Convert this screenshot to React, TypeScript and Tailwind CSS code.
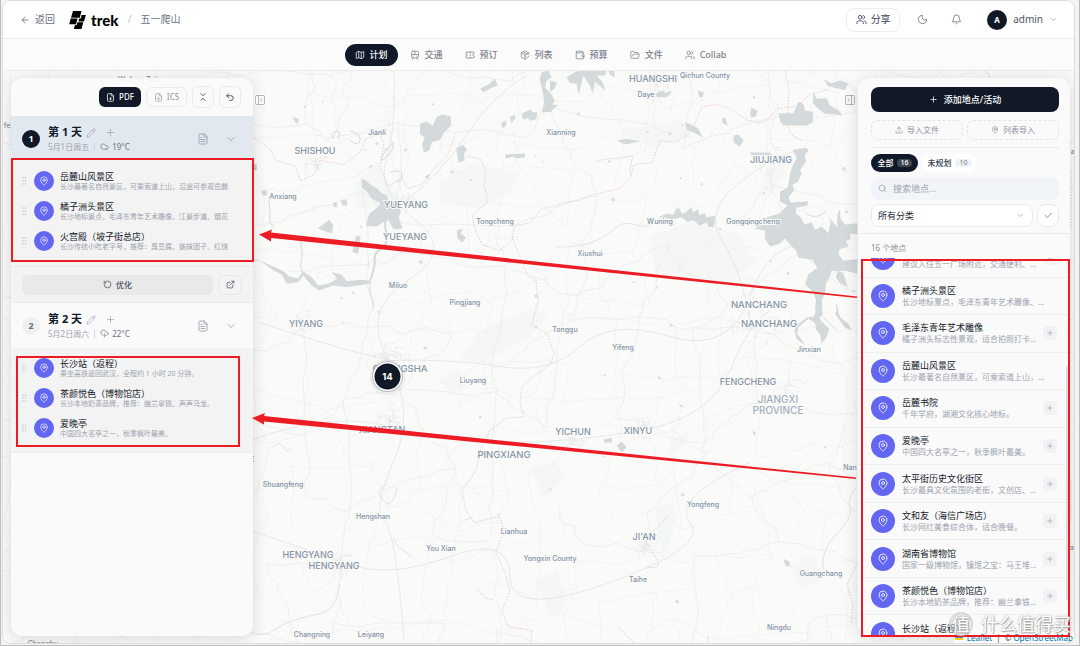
import {
  ArrowLeft, Bell, Check, ChevronDown, ChevronsDownUp, Cloud, CloudLightning, ExternalLink, FileDown, FileText,
  FolderOpen, GripVertical, Map as MapIcon, MapPin, Moon, PackageCheck, PanelLeftClose, PanelRightClose, Pencil,
  Plus, RotateCcw, Search, Ticket, TramFront, Undo2, Upload, Users, Wallet,
} from "lucide-react";
import type { LucideIcon } from "lucide-react";

type Place = { name: string; note: string; addable?: boolean };

const tabs: { label: string; icon: LucideIcon }[] = [
  { label: "计划", icon: MapIcon },
  { label: "交通", icon: TramFront },
  { label: "预订", icon: Ticket },
  { label: "列表", icon: PackageCheck },
  { label: "预算", icon: Wallet },
  { label: "文件", icon: FolderOpen },
  { label: "Collab", icon: Users },
];

const dayOne: Place[] = [
  { name: "岳麓山风景区", note: "长沙最著名自然景区，可乘索道上山，沿途可参观岳麓" },
  { name: "橘子洲头景区", note: "长沙地标景点，毛泽东青年艺术雕像、江景步道、烟花" },
  { name: "火宫殿（坡子街总店）", note: "长沙传统小吃老字号，推荐：臭豆腐、姊妹团子、红烧" },
];

const dayTwo: Place[] = [
  { name: "长沙站（返程）", note: "乘坐高铁返回武汉，全程约 1 小时 20 分钟。" },
  { name: "茶颜悦色（博物馆店）", note: "长沙本地奶茶品牌，推荐：幽兰拿铁、声声乌龙。" },
  { name: "爱晚亭", note: "中国四大名亭之一，秋季枫叶最美。" },
];

const places: Place[] = [
  { name: "五一广场酒店", note: "建议入住五一广场附近，交通便利、...", addable: true },
  { name: "橘子洲头景区", note: "长沙地标景点，毛泽东青年艺术雕像、..." },
  { name: "毛泽东青年艺术雕像", note: "橘子洲头标志性景观，适合拍照打卡...", addable: true },
  { name: "岳麓山风景区", note: "长沙最著名自然景区，可乘索道上山，..." },
  { name: "岳麓书院", note: "千年学府，湖湘文化核心地标。", addable: true },
  { name: "爱晚亭", note: "中国四大名亭之一，秋季枫叶最美。", addable: true },
  { name: "太平街历史文化街区", note: "长沙最具文化氛围的老街，文创店、...", addable: true },
  { name: "文和友（海信广场店）", note: "长沙网红美食综合体，适合晚餐。", addable: true },
  { name: "湖南省博物馆", note: "国家一级博物馆，镇馆之宝：马王堆...", addable: true },
  { name: "茶颜悦色（博物馆店）", note: "长沙本地奶茶品牌，推荐：幽兰拿铁...", addable: true },
  { name: "长沙站（返程）", note: "乘坐高铁返回武汉。", addable: true },
];

const cities: [string, number, number][] = [
  ["SHISHOU", 315, 153], ["YUEYANG", 406, 207], ["YUEYANG", 405, 239], ["YIYANG", 306, 326],
  ["HUANGSHI", 653, 81], ["JIUJIANG", 771, 162], ["FENGCHENG", 748, 384], ["YICHUN", 573, 434],
  ["XINYU", 638, 433], ["JI'AN", 644, 539], ["HENGYANG", 308, 557], ["HENGYANG", 334, 568],
  ["XIANGTAN", 382, 432],
];
const bigCities: [string, number, number][] = [
  ["NANCHANG", 759, 307], ["NANCHANG", 769, 326], ["CHANGSHA", 400, 371], ["PINGXIANG", 504, 457],
];
const towns: [string, number, number][] = [
  ["Jianli", 377, 134], ["Anxiang", 283, 198], ["Xianning", 561, 134], ["Daye", 646, 96], ["Qichun County", 705, 77],
  ["Tongcheng", 495, 223], ["Wuning", 660, 223], ["Gongqingcheng", 753, 223], ["Xiushui", 590, 255],
  ["Miluo", 398, 287], ["Pingjiang", 465, 304], ["Tonggu", 565, 331], ["Yifeng", 623, 349], ["Jinxian", 809, 351],
  ["Liuyang", 473, 382], ["Shuangfeng", 283, 486], ["Hengshan", 373, 518], ["Lianhua", 514, 533], ["You Xian", 441, 550],
  ["Yongxin County", 550, 560], ["Taihe", 638, 581], ["Yongfeng", 703, 506], ["Guangchang", 821, 575],
  ["Ningdu", 779, 629], ["Changning", 312, 636], ["Leiyang", 371, 636], ["Nan", 850, 469], ["Chengbu", 43, 645],
  ["Wufeng Tujia", 140, 81], ["fei", 8, 127], ["li", 255, 169], ["E", 252, 461], ["ar", 1074, 153], ["an", 1074, 549],
];

/* Deterministic noise in [0, 1) for the minor road mesh. */
const noise = (a: number, b: number) => {
  const v = Math.sin(a * 127.1 + b * 311.7) * 43758.5453;
  return v - Math.floor(v);
};

function roadMesh(step: number, seed: number) {
  const node = (i: number, j: number) => [
    i * step + (noise(i + seed, j) - 0.5) * step * 0.9,
    60 + j * step + (noise(j, i + seed) - 0.5) * step * 0.9,
  ];
  let d = "";
  for (let i = -1; i < 1090 / step + 1; i++) {
    for (let j = -1; j < 600 / step + 1; j++) {
      const [x, y] = node(i, j);
      for (const [di, dj] of [[1, 0], [0, 1]]) {
        if (noise(i * 3 + di + seed, j * 5 + dj) < 0.25) continue;
        const [u, v] = node(i + di, j + dj);
        d += `M${x.toFixed(1)} ${y.toFixed(1)}`;
        let px = x;
        let py = y;
        for (let k = 1; k <= 4; k++) {
          const last = k === 4;
          const qx = x + ((u - x) * k) / 4 + (last ? 0 : (noise(px, k + i) - 0.5) * step * 0.16);
          const qy = y + ((v - y) * k) / 4 + (last ? 0 : (noise(py, k + j) - 0.5) * step * 0.16);
          d += `Q${(px + (noise(qx, k) - 0.5) * 4).toFixed(1)} ${(py + (qy - py) / 2).toFixed(1)} ${qx.toFixed(1)} ${qy.toFixed(1)}`;
          px = qx;
          py = qy;
        }
      }
    }
  }
  return d;
}

/* Small local street grids around a town. */
function streets(cx: number, cy: number, r: number) {
  let d = "";
  for (let k = 0; k < 26; k++) {
    const a = noise(k, cx) * 6.28;
    const q = noise(cy, k) * r;
    const x = cx + Math.cos(a) * q;
    const y = cy + Math.sin(a) * q;
    const l = 3 + noise(k, k) * 6;
    d += k % 2 ? `M${x.toFixed(1)} ${y.toFixed(1)}l${l.toFixed(1)} 1` : `M${x.toFixed(1)} ${y.toFixed(1)}l1 ${l.toFixed(1)}`;
  }
  return d;
}

const minorRoads = roadMesh(38, 3);
const majorRoads = roadMesh(71, 11);
const townStreets = [
  [395, 352, 22], [388, 415, 16], [755, 318, 26], [340, 565, 12], [642, 545, 8], [773, 160, 14], [382, 356, 14],
  [405, 200, 10], [300, 320, 12], [572, 440, 12], [640, 425, 14], [785, 385, 18], [660, 80, 16], [315, 160, 12],
].map(([x, y, r]) => streets(x, y, r)).join("");

const ponds = Array.from({ length: 70 }, (_, k) => {
  const x = 255 + noise(k, 7) * 600;
  const y = 75 + noise(9, k) * (k % 3 ? 260 : 550);
  const s = 1 + noise(k, k + 2) * 2;
  return `M${x.toFixed(1)} ${y.toFixed(1)}l${s.toFixed(1)} ${(-s / 2).toFixed(1)}l${(s / 2).toFixed(1)} ${s.toFixed(1)}l${(-s).toFixed(1)} ${(s / 3).toFixed(1)}z`;
}).join("");

function MapCanvas() {
  return (
    <svg className="absolute inset-0 h-full w-full" viewBox="3 70 1071 573" preserveAspectRatio="xMidYMid slice" aria-label="地图">
      <rect x="0" y="60" width="1090" height="600" fill="#fafaf8" />
      <g fill="#f5f7f5">
        <path d="M356 182l22-18 10 20 14 14-20 8-26 2zM440 180l30-16 50 8-10 20-30 16-40-6zM480 330l50-22 18 6-20 24-48 26-20-6zM650 236l40-14 46 10 20 30-30 22-70-10zM764 172l22-10-8 24-12 8zM620 130l60-10 12 16-40 12zM790 565l24-12 8 24-20 14zM535 580l22-10 10 30-14 20zM530 468l26-8 8 18-20 20zM655 510l18-10 4 20-14 40zM672 440l18-10-8 20-14 4zM438 380l20-10 14 14-20 10z" />
      </g>
      <path d={minorRoads} fill="none" stroke="#f0f1f1" strokeWidth="0.8" />
      <path d={majorRoads} fill="none" stroke="#ebedee" strokeWidth="0.9" />
      <path d={townStreets} fill="none" stroke="#e6e8ea" strokeWidth="0.7" />
      <g fill="none" stroke="#e6e8ea" strokeWidth="1">
        <path d="M260 322q60 20 90 28t40 10q60-2 110 6t80-20 90-10 80-40 60-50" />
        <path d="M394 70q2 60-8 90t30 60 -8 60 -20 80 6 100 -10 60 20 120" />
        <path d="M400 205q40-30 66-70t60-60" />
        <path d="M752 330q-10-60-30-90t20-60 60-30" />
        <path d="M250 440q80-30 140-14t120 16 130-12 90-60 40-60" />
        <path d="M250 530q60 20 100 34t100-8 60 20 100 6 80-60 60-60" />
      </g>
      <g fill="none" stroke="#ecc9cc" strokeWidth="1" strokeDasharray="1.5 1.5">
        <path d="M254 138l16 10 6 12 20 6 4 14 14-6 6-14 24 4 16-12 6-14 14-4 4 8-4 24 8 20 14-8 6 10 14-4 14-18 12-12 8-22" />
        <path d="M466 156l14 2 6 12-2 14 4 18-16 12 4 18 6 12 18 6 12-10 2-14 16-4 12-14 12-2 10-4 14-2 16-6 26-6 10-10 4-14 18-2 8-22 16 2 16-12 10-24 16-2 12 4 18 12 16 2 14-14 18-2 14-12 20-6" />
        <path d="M785 70l4 20-2 30 4 14 10 6M512 236l16 40 8 4 2 20-6 24 16 10 6 20-4 10-14 10-14 12-2 16 4 14-18 2-16 12-10 20-4 20-14 20 4 20 8 12 26-6 4 14-8 22 8 18 6 20-8 20 6 16 24 4-2 20-6 14" />
        <path d="M857 564l-10 20 6 20-2 20M985 70l30 40M1071 170v60M1071 480v40M4 142l20 6" />
      </g>
      <path d={ponds} fill="#d9dee0" />
      <g transform="translate(250 70) scale(.33333)" fill="#d4dadc">
        <path d="M335 325L345 328L362 343L385 356L392 366L412 376L415 390L450 396L452 425L446 440L458 475L430 476L415 448L400 455L380 468L348 466L352 450L358 430L385 408L392 398L365 385L350 362L335 352Z" />
        <path d="M510 160l20-8 18 14 12-26 16-8 26 5 2 28-22 20-10 22-26 8-8 24-16 8-6-26 8-20-14-10z" />
        <path d="M690 55l25-13 20-17 8 20-18 7-25 13z" />
        <path d="M875 5l20-5 10 20-15 10-5 20 20 22 10 20-14 15 4 17-30 2 8-32-6-34-8-34z" />
        <path d="M815 130l25-12 10 8 12-2-3 22-18 5-8-8-14 4zM752 160l14-10 4 12-10 12zM780 140l14-8 2 12-12 14z" />
        <path d="M765 252l60-3v12l-26 2-8-5-24 6zM618 235l20-13 14 16-10 12 2 20-18 6z" />
        <path d="M203 475l20-16 15-12 12 18-4 24zM318 495l14 2-7 53-18-5zM272 390l18-4 2 19-14 1zM250 395h10l2 15-12-1zM128 140l18 4-2 16-8-4zM34 360l18 0-2 16-14-2z" />
        <path d="M30 570L75 590L100 602L118 618L145 624L158 602L185 620L205 645L235 640L262 625L245 605L275 612L290 632L330 628L360 630L358 640L320 645L290 650L250 645L208 660L185 645L160 615L145 635L110 640L95 612L70 600Z" />
        <path d="M620 480l20-6-8 14 16 14-12 14-14-14zM525 318l16-8-8 16z" />
        <g fill="none" stroke="#d4dadc">
          <path strokeWidth="6" d="M360 630q16-40 14-62t20-34 14-50 8-40" />
          <path strokeWidth="3" d="M362 632q-6 30 2 48t6 32M55 380q6 40 4 60t14 34M150 510q10 40 4 60t4 34M30 570q-10-4-22-2" />
          <path strokeWidth="3" d="M420 305q20-8 34 0 6 32-16 26M430 215q0 36-36 56 0-20 36-56M250 205q-12-18 12-24 14 8 2 24M300 180q40 14 28 36-12 8-28-6" />
        </g>
      </g>
      <g transform="translate(550 70) scale(.33333)" fill="#d4dadc">
        <path d="M50 20l25-15 15-5h80l-5 15h-25l20 25 5 22-15-16-15-12-8 34-7-22-20-30-14 56-6-32-20-2zM175 0h18l2 20-16-8zM0 30l22 6-10 20-12 8zM0 100l24 4-24 20z" />
        <path d="M315 70l20-9 10 6 23-5-18 18-28 0zM405 155l20 8 20 12 14 26-18-10-31-14zM550 195l15-2 16 16-12 20-18-13zM600 130l4-18 18 8-3 16-14 6zM515 145l10-5 8 26-14-8zM444 60l18 6-6 16-10-4z" />
        <path d="M685 128h45l16-34 14 6 5 20 25 4-2 32-18 9h-70l-10-14zM820 25l25 14 26-10 24 10-10 20-34-8-17-4zM790 65l10 20 30-2 10 22 26 14 12 16-28-4-26-1-19-15-16-16z" />
        <path d="M728 238L768 232L776 240L764 254L768 272L750 300L756 308L742 335L728 342L732 360L716 380L722 396L775 392L772 406L738 412L738 430L752 440L764 462L785 455L795 478L815 468L835 488L842 455L836 440L862 470L862 430L870 418L872 445L885 462L922 458L922 492L900 490L902 505L888 512L896 528L868 536L866 552L880 570L922 566L922 610L884 600L858 602L845 600L838 622L828 640L826 665L815 690L818 720L795 720L798 690L790 665L765 642L775 612L802 592L788 568L745 562L738 540L722 524L704 504L690 520L660 528L645 505L645 480L612 475L640 460L650 440L690 428L712 405L690 392L690 364L714 350L722 300L740 262Z" />
        <path d="M865 600l16 10 12 40-22-10-14-20zM800 715L816 715L818 735L808 742L815 752L838 775L830 800L815 820L810 790L798 778L796 758L775 745L745 770L742 790L758 812L765 824L740 806L733 780L742 762L770 742L792 738ZM855 730l8-20 6 30 24 20 12 20-20-8z" />
        <path d="M325 440L350 430L372 432L378 415L388 414L396 430L408 425L424 410L430 426L444 416L448 434L464 428L470 440L495 436L492 470L474 468L470 455L450 466L430 450L410 454L396 440L370 446ZM200 210l30-5 40 7-44 10z" />
        <path d="M600 245l60 2 4 8-60 0z" />
        <g fill="none" stroke="#d4dadc" strokeWidth="3">
          <path d="M140 272q40-10 60-8l48-8-8 40 2 20M20 530q80 0 120-20t60-40 60-6 70-22" strokeWidth="2" />
          <path d="M860 700q0 40 20 50t20 26M770 430q30 20 60-10M820 740l40 40" />
        </g>
      </g>
      <g transform="translate(550 350) scale(.33333)" fill="#d4dadc">
        <path d="M160 268l24-7 3 14-22 2zM200 285l15-11 15 16-15 16zM385 160l14 4-4 8zM700 625l18 8 2 16-14-4zM606 240l12 8-4 10zM820 288l10 0-2 8zM322 78l12 2-4 8z" />
        <path fill="none" stroke="#dfe3e4" strokeWidth="3" d="M350 500q-30 40-54 50t14 60-20 40M205 830l50 50M475 855v24M820 660q-10-60 40-110t40-80 20-60" />
      </g>
      <g transform="translate(250 350) scale(.33333)" fill="none" stroke="#dfe3e4" strokeWidth="4">
        <path d="M70 290q20-20 30 0t24 4M430 560q10 30 30 40t24 20M685 720l20 22 24 6M640 510l30-10M410 400q-40 20-10 50t40-40M270 700q-10 80-60 90t-80 20-60 30-62 8" strokeWidth="3" />
      </g>
      <g fill="#8494a7" stroke="#fafaf8" strokeWidth="2" paintOrder="stroke" textAnchor="middle" fontFamily="Inter, sans-serif" fontWeight="500">
        <g fontSize="9">{cities.map(([t, x, y], k) => <text key={k} x={x} y={y}>{t}</text>)}</g>
        <g fontSize="9.500">{bigCities.map(([t, x, y], k) => <text key={k} x={x} y={y}>{t}</text>)}</g>
        <g fontSize="10" fill="#a3afbc">
          <text x="778" y="402">JIANGXI</text>
          <text x="778" y="413">PROVINCE</text>
        </g>
        <g fontSize="7">{towns.map(([t, x, y], k) => <text key={k} x={x} y={y}>{t}</text>)}</g>
      </g>
      <g>
        <circle cx="387.500" cy="377" r="18" fill="#0f172a" opacity="0.05" />
        <circle cx="387.500" cy="376" r="15.500" fill="#b9bcc3" />
        <circle cx="387.500" cy="376" r="14.500" fill="#fff" />
        <circle cx="387.500" cy="376" r="13" fill="#111827" />
        <text x="387.500" y="379.500" textAnchor="middle" fontSize="9.500" fontWeight="700" fill="#fff" fontFamily="Inter, sans-serif">14</text>
      </g>
    </svg>
  );
}

function Pin({ large }: { large?: boolean }) {
  return (
    <span className={large ? "flex size-6 shrink-0 items-center justify-center rounded-full bg-[#6366f1] text-white" : "flex size-5 shrink-0 items-center justify-center rounded-full bg-[#6366f1] text-white"}>
      <MapPin className={large ? "size-3" : "size-[10px]"} strokeWidth={1.6} />
    </span>
  );
}

function DayHeader({ n, date, temp, icon: Weather, active }: { n: number; date: string; temp: string; icon: LucideIcon; active?: boolean }) {
  return (
    <div className={active ? "flex h-[42px] items-center gap-2 bg-[#e2e8f0] pt-[3px] pr-4 pl-[11px]" : "flex h-[45px] items-center gap-2 pr-4 pl-[11px]"}>
      <span className={active ? "flex size-[18px] items-center justify-center rounded-full bg-[#111827] text-[9px] font-bold text-white" : "flex size-[18px] items-center justify-center rounded-full bg-[#f0f0f1] text-[9px] font-bold text-[#6b7280]"}>{n}</span>
      <div className="flex-1">
        <div className="flex h-4 items-center">
          <h2 className="text-[11px] font-bold text-[#111827]">第 {n} 天</h2>
          <button aria-label="编辑" className="ml-1 text-[#9ca3af]"><Pencil className="size-[10px]" strokeWidth={1.6} /></button>
          <button aria-label="添加" className="ml-[9px] text-[#9ca3af]"><Plus className="size-[11px]" strokeWidth={1.6} /></button>
        </div>
        <div className="flex h-3 items-center text-[8px] text-[#9ca3af]">
          <span>{date}</span>
          <span className="mx-[5px] h-2 w-px bg-[#d1d5db]" />
          <Weather className="mr-[3px] size-[9px] text-[#6b7280]" strokeWidth={1.8} />
          <span className="text-[#6b7280]">{temp}</span>
        </div>
      </div>
      <button aria-label="笔记" className="text-[#9ca3af]"><FileText className="size-3" strokeWidth={1.8} /></button>
      <button aria-label="折叠" className="ml-2 text-[#9ca3af]"><ChevronDown className="size-3" strokeWidth={1.8} /></button>
    </div>
  );
}

function DayList({ items }: { items: Place[] }) {
  return (
    <ul>
      {items.map((p) => (
        <li key={p.name} className="flex h-[30px] items-center gap-[6px] pr-[22px] pl-2">
          <GripVertical className="mr-[-1px] size-[10px] text-[#c9cdd3]" strokeWidth={1.8} />
          <Pin />
          <div className="min-w-0 flex-1">
            <div className="truncate text-[9px] leading-[11px] text-[#111827]">{p.name}</div>
            <div className="overflow-hidden text-[7px] leading-[10px] whitespace-nowrap text-[#9ca3af]">{p.note}</div>
          </div>
        </li>
      ))}
    </ul>
  );
}

function LeftPanel() {
  return (
    <aside className="flex w-[242px] flex-col overflow-hidden rounded-xl bg-[#fafafa]/95 shadow-[0_2px_16px_rgba(0,0,0,0.14)]">
      <div className="flex h-[38px] shrink-0 items-center justify-end gap-[5px] pr-3">
        <button className="flex h-5 w-[42px] items-center justify-center gap-1 rounded-md bg-[#111827] text-[8px] font-medium text-white"><FileDown className="size-[9px]" />PDF</button>
        <button className="flex h-5 w-[41px] items-center justify-center gap-1 rounded-md border border-[#e8eaed] text-[8px] font-medium text-[#9ca3af]"><FileDown className="size-[9px]" />ICS</button>
        <button aria-label="全部折叠" className="flex size-[22px] items-center justify-center rounded-md border border-[#e8eaed] text-[#374151]"><ChevronsDownUp className="size-[10px]" /></button>
        <button aria-label="撤销" className="flex size-[22px] items-center justify-center rounded-md border border-[#e8eaed] text-[#374151]"><Undo2 className="size-[10px]" /></button>
      </div>
      <DayHeader n={1} date="5月1日周五" temp="19°C" icon={Cloud} active />
      <div className="bg-[#f3f3f3] pt-2 pb-[10px]"><DayList items={dayOne} /></div>
      <div className="flex h-[37px] shrink-0 items-center gap-[5px] border-y border-[#e9eaeb] bg-[#f3f3f3] px-[11px]">
        <button className="flex h-5 flex-1 items-center justify-center gap-1 rounded-md bg-[#e9e9e9] text-[8px] font-medium text-[#4b5563]"><RotateCcw className="size-[9px]" />优化</button>
        <button aria-label="打开" className="flex h-5 w-6 items-center justify-center rounded-md border border-[#e5e7eb] text-[#4b5563]"><ExternalLink className="size-[9px]" /></button>
      </div>
      <DayHeader n={2} date="5月2日周六" temp="22°C" icon={CloudLightning} />
      <div className="border-b border-[#ebecee] bg-[#f3f3f3] pt-[5px] pb-[9px]"><DayList items={dayTwo} /></div>
    </aside>
  );
}

function RightPanel() {
  return (
    <aside className="relative flex w-[212px] flex-col overflow-hidden rounded-xl bg-[#fafafa]/95 shadow-[0_2px_16px_rgba(0,0,0,0.14)]">
      <div className="flex shrink-0 flex-col px-[11px] pt-[9px] pl-[13px]">
        <button className="flex h-[25px] items-center justify-center gap-[6px] rounded-lg bg-[#111827] text-[9px] font-medium text-white"><Plus className="size-[9px]" />添加地点/活动</button>
        <div className="mt-2 grid grid-cols-2 gap-1">
          <button className="flex h-5 items-center justify-center gap-1 rounded-md border border-dashed border-[#e2e4e8] text-[8px] text-[#8b929e]"><Upload className="size-2" />导入文件</button>
          <button className="flex h-5 items-center justify-center gap-1 rounded-md border border-dashed border-[#e2e4e8] text-[8px] text-[#8b929e]"><MapPin className="size-2" />列表导入</button>
        </div>
        <div className="mt-[7px] flex gap-1 border-t border-[#e8eaed] pt-[6px]">
          <button className="flex h-[18px] w-[47px] items-center justify-center gap-1 rounded-full bg-[#111827] text-[8px] font-medium text-white">全部<span className="rounded-full bg-white/20 px-[3px] text-[7px] leading-2">16</span></button>
          <button className="flex h-[18px] w-[55px] items-center justify-center gap-1 rounded-full bg-white text-[8px] font-medium text-[#374151]">未规划<span className="rounded-full bg-[#eef2f7] px-1 text-[7px] leading-2 text-[#8b929e]">10</span></button>
        </div>
        <label className="mt-[5px] flex h-[23px] items-center gap-[6px] rounded-lg bg-[#f1f5f9] px-[7px] text-[#9ca3af]">
          <Search className="size-[9px]" />
          <input aria-label="搜索地点" placeholder="搜索地点..." className="min-w-0 flex-1 bg-transparent text-[9px] outline-none placeholder:text-[#9ca3af]" />
        </label>
        <div className="mt-1 flex gap-1">
          <div className="relative flex-1">
            <select aria-label="分类" className="block h-[23px] w-full appearance-none rounded-lg border border-[#e8eaed] bg-white pl-[6px] text-[9px] text-[#1f2937]">
              <option>所有分类</option>
            </select>
            <ChevronDown className="pointer-events-none absolute top-[7px] right-2 size-[9px] text-[#9ca3af]" />
          </div>
          <button aria-label="选择" className="flex h-[23px] w-[22px] items-center justify-center rounded-lg border border-[#e8eaed] bg-white text-[#6b7280]"><Check className="size-[9px]" /></button>
        </div>
      </div>
      <div className="mt-[6px] flex h-[25px] shrink-0 items-center border-t border-[#e8eaed] pt-1 pl-[13px] text-[8px] text-[#8b929e]">16 个地点</div>
      <div className="min-h-0 flex-1 overflow-hidden">
        <ul className="-mt-[18px] grid h-[413px] auto-rows-fr">
          {places.map((p) => (
            <li key={p.name} className="flex items-center gap-[7px] border-b border-[#eeeff1] pr-[13px] pl-[13px]">
              <Pin large />
              <div className="min-w-0 flex-1">
                <div className="text-[9px] leading-[12px] whitespace-nowrap text-[#111827]">{p.name}</div>
                <div className="text-[8px] leading-[10px] whitespace-nowrap text-[#9ca3af]">{p.note}</div>
              </div>
              {p.addable && <button aria-label="添加" className="flex size-[14px] shrink-0 items-center justify-center rounded bg-[#f1f2f3] text-[#9ca3af]"><Plus className="size-2" /></button>}
            </li>
          ))}
        </ul>
      </div>
      <span className="absolute top-[288px] right-px h-[234px] w-[3px] rounded-full bg-[#d9dce0]" />
    </aside>
  );
}

function TopBar() {
  return (
    <header className="flex h-[38px] shrink-0 items-center border-b border-[#ececee] bg-white pr-4 pl-[17px] text-[10px] text-[#6b7280]">
      <a href="#back" className="flex items-center gap-[5px]"><ArrowLeft className="size-[10px]" />返回</a>
      <a href="#home" className="ml-[14px] flex items-center gap-[5px] text-black">
        <svg className="h-[18px] w-[17px]" viewBox="0 0 17 18" fill="currentColor" aria-hidden="true">
          <path d="M4 0H12.500L10.800 6.800H2Z" />
          <path d="M1.700 7.600H8.600L7 13.200H0.200Z" />
          <path d="M12.700 3.900H16.900L15 10.600H9.400L10.300 7.500H11.700Z" />
          <path d="M9.100 11.300H14.300L12.500 17.900H4.900L5.900 13.900H7.700L8.500 11.300Z" />
        </svg>
        <span className="font-['Lato'] text-[15px] leading-[18px] font-black">trek</span>
      </a>
      <span className="mx-[9px] text-[11px] text-[#c3c7ce]">/</span>
      <span>五一爬山</span>
      <div className="flex-1" />
      <button className="flex h-6 w-[54px] items-center justify-center gap-1 rounded-lg border border-[#eceef0] text-[#374151]"><Users className="size-[11px]" strokeWidth={1.8} />分享</button>
      <button aria-label="深色模式" className="ml-[17px]"><Moon className="size-[11px]" strokeWidth={1.8} /></button>
      <button aria-label="通知" className="ml-[23px]"><Bell className="size-[11px]" strokeWidth={1.8} /></button>
      <button className="ml-[25px] flex items-center gap-[6px] text-[#4b5563]">
        <span className="flex size-5 items-center justify-center rounded-full bg-[#111827] text-[8px] font-bold text-white">A</span>
        admin
        <ChevronDown className="size-[9px] text-[#9ca3af]" />
      </button>
    </header>
  );
}

function Annotations() {
  return (
    <svg className="pointer-events-none absolute inset-0 h-full w-full" viewBox="1 0 1078 645" preserveAspectRatio="none" aria-hidden="true">
      <g fill="none" stroke="#ed1c24" strokeWidth="2">
        <rect x="12" y="159" width="241" height="102" />
        <rect x="17" y="357" width="222" height="89" />
        <rect x="862" y="260" width="207" height="376" />
      </g>
      <g fill="#ed1c24">
        <path d="M259 234.500L272 229.500L271 232.500L857 296.500L857 298L271 238L271 241.500Z" />
        <path d="M252 418L265 413L264 416L856 477.500L856 479L264 421.500L264 424.500Z" />
      </g>
    </svg>
  );
}

export default function App() {
  return (
    <div lang="zh-CN" className="relative flex h-screen flex-col overflow-hidden border-x border-b border-[#bdbdbd] bg-[#f4f4f4] pt-px pr-[5px] pb-[2px] pl-[2px] font-['Noto_Sans','Noto_Sans_CJK_SC',sans-serif]">
      <div className="flex min-h-0 flex-1 flex-col overflow-hidden rounded-lg bg-white shadow-[0_0_0_1px_#dcdcdc]">
        <TopBar />
        <nav className="flex h-[32px] shrink-0 items-center justify-center gap-[2px] border-b border-[#ececee] bg-[#fbfbfb] pl-1">
          {tabs.map(({ label, icon: Icon }, k) => (
            <button key={label} className={k === 0 ? "flex h-[22px] items-center gap-[5px] rounded-full bg-[#111827] px-[10px] text-[9px] font-medium text-white" : "flex h-[22px] items-center gap-[5px] rounded-full px-[10px] text-[9px] font-medium text-[#7b818c]"}>
              <Icon className="size-[10px]" strokeWidth={1.8} />
              {label}
            </button>
          ))}
        </nav>
        <main className="relative flex min-h-0 flex-1 bg-[#fafaf8]">
          <MapCanvas />
          <div className="relative flex min-w-0 flex-1 justify-between pt-[7px] pr-1 pb-[7px] pl-2">
            <div className="flex gap-px">
              <LeftPanel />
              <button aria-label="收起左侧" className="mt-4 flex h-3 items-center bg-[#fafaf8] text-[#9ca3af]"><PanelLeftClose className="size-3" strokeWidth={1.6} /></button>
            </div>
            <div className="flex gap-[2px]">
              <button aria-label="收起右侧" className="mt-4 flex h-3 items-center bg-[#fafaf8] text-[#9ca3af]"><PanelRightClose className="size-3" strokeWidth={1.6} /></button>
              <RightPanel />
            </div>
          </div>
          <div className="absolute right-0 bottom-0 flex items-center gap-1 bg-white/80 px-px text-[8px] leading-[11px] text-[#4b5563]">
            <span className="h-[5px] w-2 border-b-2 border-[#ffd500] bg-[#4c7be1]" />
            <a href="#leaflet" className="text-[#0078a8]">Leaflet</a>|
            <span>© <a href="#osm" className="text-[#0078a8]">OpenStreetMap</a></span>
          </div>
        </main>
      </div>
      <Annotations />
      <div className="pointer-events-none absolute right-2 bottom-[9px] flex items-center gap-2 text-[18px] leading-6 text-white [text-shadow:0_0_2px_#999,1px_1px_1px_#aaa]">
        <span className="flex size-6 items-center justify-center rounded-full border border-[#cccccc] bg-[#ccc]/40">值</span>
        <span>什么值得买</span>
      </div>
    </div>
  );
}
